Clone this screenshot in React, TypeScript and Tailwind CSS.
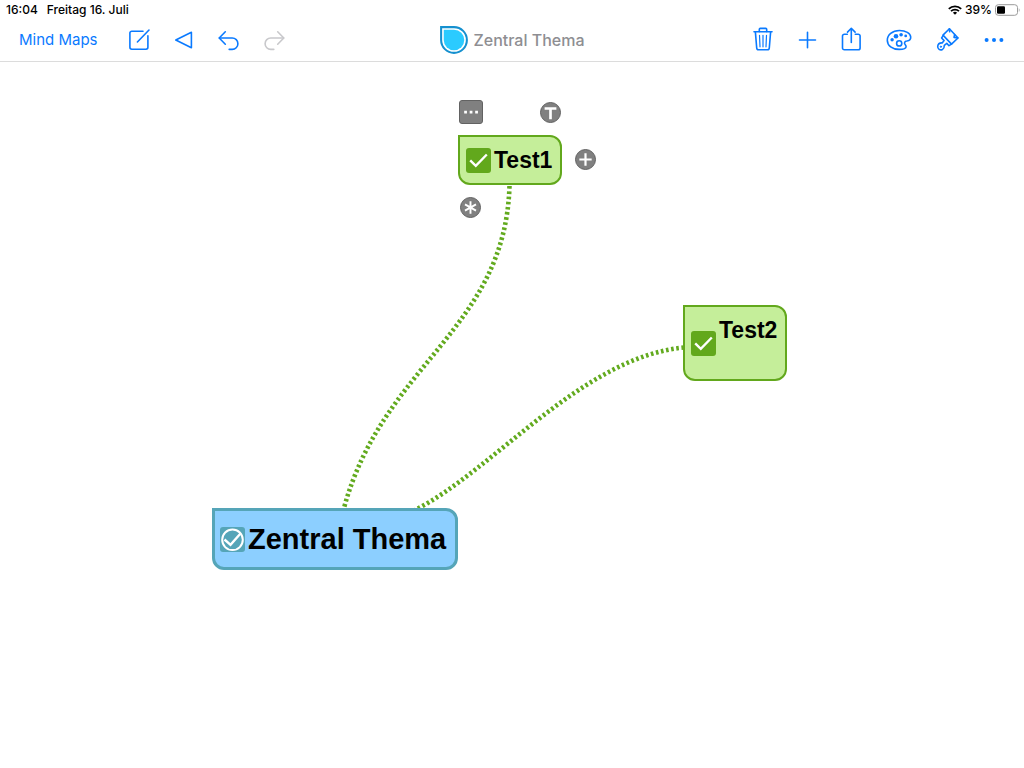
import { useState } from 'react';
import type { ReactNode } from 'react';
import { clsx } from 'clsx';

type ToolButtonProps = {
  label: string;
  className: string;
  disabled?: boolean;
  children: ReactNode;
};

function ToolButton({ label, className, disabled, children }: ToolButtonProps) {
  return (
    <button
      type="button"
      aria-label={label}
      disabled={disabled}
      className={clsx(
        'flex h-full shrink-0 items-center justify-center',
        disabled ? 'text-[#c8c8cb]' : 'text-[#0a7aff]',
        className,
      )}
    >
      <svg
        viewBox="0 0 28 28"
        className="size-7"
        fill="none"
        stroke="currentColor"
        strokeWidth="1.6"
        strokeLinecap="round"
        strokeLinejoin="round"
        aria-hidden="true"
      >
        {children}
      </svg>
    </button>
  );
}

function StatusBar() {
  return (
    <div className="flex h-[19px] items-center justify-between pr-1 pl-1.5 text-xs font-medium text-black">
      <div className="flex gap-[9px]">
        <span>16:04</span>
        <span>Freitag 16. Juli</span>
      </div>
      <div className="flex items-center gap-[3px]">
        <svg viewBox="0 0 14 10" className="h-2.5 w-3.5" fill="none" stroke="black" strokeWidth="1.8" aria-hidden="true">
          <path d="M0.8 3.8a8.9 8.9 0 0 1 12.4 0" />
          <path d="M3 6.2a5.8 5.8 0 0 1 8 0" />
          <path d="M7 9.8 4.9 7.7a3 3 0 0 1 4.2 0z" fill="black" stroke="none" />
        </svg>
        <span>39%</span>
        <svg viewBox="0 0 25 12" className="h-3 w-[25px]" aria-hidden="true">
          <rect x="0.5" y="0.7" width="22" height="10.6" rx="2.8" fill="none" stroke="#9b9b9b" />
          <rect x="2" y="2.2" width="8" height="7.6" rx="1.2" fill="black" />
          <path d="M23.8 4.2v3.6c1-.4 1-3.2 0-3.600z" fill="#9b9b9b" />
        </svg>
      </div>
    </div>
  );
}

function Toolbar() {
  return (
    <div className="grid h-[42px] grid-cols-[1fr_auto_1fr] items-center">
      <div className="flex h-full items-center pl-[19px]">
        <a href="#mind-maps" className="w-[97px] text-[15px] whitespace-nowrap text-[#0a7aff]">
          Mind Maps
        </a>
        <ToolButton label="Bearbeiten" className="w-[45px]">
          <path d="M18 5.2H6.800a1.900 1.900 0 0 0-1.900 1.900v14.200a1.900 1.900 0 0 0 1.900 1.900H21a1.900 1.900 0 0 0 1.900-1.900V9.700" />
          <path d="M12.400 16 24 4" />
        </ToolButton>
        <ToolButton label="Zurück" className="w-[45px]">
          <path d="M21.400 6.300v15.400L5.800 14z" />
        </ToolButton>
        <ToolButton label="Widerrufen" className="w-[45px]">
          <path d="M10.300 5.800 4.200 12l6.100 6.200" />
          <path d="M4.400 12h12.800a5.700 5.700 0 0 1 0 11.400h-3" />
        </ToolButton>
        <ToolButton label="Wiederholen" className="w-[45px]" disabled>
          <path d="M17.700 5.800 23.800 12l-6.100 6.200" />
          <path d="M23.600 12H10.800a5.700 5.700 0 0 0 0 11.400h3" />
        </ToolButton>
      </div>

      <div className="flex items-center gap-1.5">
        <svg viewBox="0 0 30 30" className="size-7" aria-hidden="true">
          <path d="M1.200 1.200H15A13.800 13.800 0 1 1 1.200 15z" fill="white" stroke="#1590cf" strokeWidth="2.200" />
          <path d="M4 4h11A11 11 0 1 1 4 15z" fill="#2bcbff" />
        </svg>
        <h1 className="text-base font-medium whitespace-nowrap text-[#8e8e92]">Zentral Thema</h1>
      </div>

      <div className="flex h-full items-center justify-end pr-[7px]">
        <ToolButton label="Löschen" className="w-11">
          <path d="M5 5.800h18" />
          <path d="M10.300 5.600V3.400a1 1 0 0 1 1-1h5.400a1 1 0 0 1 1 1v2.200" />
          <path d="m6.400 6.100 1.300 15.900a1.900 1.900 0 0 0 1.900 1.800h8.800a1.900 1.900 0 0 0 1.900-1.800l1.300-15.900" />
          <path d="m10.500 9.300.5 11.500M14 9.300v11.500M17.500 9.300l-.5 11.500" strokeWidth="1.200" />
        </ToolButton>
        <ToolButton label="Hinzufügen" className="w-11">
          <path d="M14.500 6.200v15.600M6.500 14h16" />
        </ToolButton>
        <ToolButton label="Teilen" className="w-11">
          <path d="M10.300 8.200H7.400a1.900 1.900 0 0 0-1.900 1.900v11.800a1.900 1.900 0 0 0 1.900 1.900h13.800a1.900 1.900 0 0 0 1.900-1.900V10.100a1.900 1.900 0 0 0-1.900-1.900h-2.900" />
          <path d="M14.300 16.500V2.500M10.500 6.100l3.800-3.800 3.800 3.800" />
        </ToolButton>
        <ToolButton label="Farben" className="w-[52px]">
          <path d="M20.100 18.500c-1.200-1.300-.5-3.300 1.700-3.500 2.600-.3 4.100-1.800 3.900-4.100C25.400 7.300 20.800 4.500 14.500 4.500 7.300 4.500 2.300 8.700 2.300 14.200c0 5.400 4.900 9.200 11.900 9.200 3.700 0 6.800-.9 6.900-2.600.1-.9-.4-1.600-1-2.300z" />
          <circle cx="14.200" cy="17.400" r="2.600" />
          <g fill="currentColor" stroke="none">
            <circle cx="7.100" cy="13.800" r="1.700" />
            <circle cx="11" cy="10.200" r="2.300" />
            <circle cx="16.100" cy="8.700" r="1.800" />
            <circle cx="20.700" cy="9.900" r="1.400" />
          </g>
        </ToolButton>
        <ToolButton label="Stil" className="w-[46px]">
          <path d="M15.400 2.800 24 12l-6.500 6.100L9 9.100z" />
          <path d="m15.400 2.800.3 3M23.700 11.900l-3.700-.5.600-2.800" />
          <path d="M9.300 9.400 7.600 12l2.500 2.600-1.900 2.300c-2.500-.1-4.300 1.400-4.500 3.500-.2 2.600 2.400 4.300 4.700 3.100 1.400-.8 2-2.200 1.900-4.100l2.500-2 2.200 2.300 2.500-1.600" />
          <circle cx="6.900" cy="20.700" r=".7" fill="currentColor" strokeWidth=".8" />
        </ToolButton>
        <ToolButton label="Mehr" className="w-[46px]">
          <g fill="currentColor" stroke="none">
            <circle cx="6.600" cy="14" r="2" />
            <circle cx="14" cy="14" r="2" />
            <circle cx="21.400" cy="14" r="2" />
          </g>
        </ToolButton>
      </div>
    </div>
  );
}

type TaskCheckProps = {
  id: string;
  className: string;
  ringed?: boolean;
};

function TaskCheck({ id, className, ringed }: TaskCheckProps) {
  const [checked, setChecked] = useState(true);

  return (
    <span className="relative size-[25px] shrink-0">
      <input
        id={id}
        type="checkbox"
        checked={checked}
        onChange={(event) => setChecked(event.target.checked)}
        className={clsx('block size-full appearance-none rounded-[3px]', className)}
      />
      <svg
        viewBox="0 0 25 25"
        className="pointer-events-none absolute inset-0 size-full"
        fill="none"
        stroke="white"
        strokeWidth="2.4"
        aria-hidden="true"
      >
        {ringed ? <circle cx="12.500" cy="12.800" r="10.300" strokeWidth="2" /> : null}
        {checked ? <path d={ringed ? 'M4.500 12.500 10.500 17.800 20.500 6.500' : 'M4.200 12.300 9.800 17.800 20.800 6.500'} /> : null}
      </svg>
    </span>
  );
}

type HandleProps = {
  label: string;
  className: string;
  children: ReactNode;
};

function Handle({ label, className, children }: HandleProps) {
  return (
    <button
      type="button"
      aria-label={label}
      className={clsx('absolute border border-[#626262] bg-[#808080]', className)}
    >
      <svg viewBox="0 0 20 20" className="size-full" fill="none" stroke="white" strokeWidth="2.3" aria-hidden="true">
        {children}
      </svg>
    </button>
  );
}

function MapCanvas() {
  return (
    <main className="relative flex-1 overflow-hidden font-['Liberation_Sans',Arial,sans-serif] font-bold text-black">
      <svg
        width="800"
        height="520"
        className="absolute top-0 left-0"
        fill="none"
        stroke="#62aa1e"
        strokeWidth="4.6"
        strokeDasharray="2.6 2.6"
        aria-hidden="true"
      >
        <path d="M509.500 124C505 268 383 302 344 446" />
        <path d="M684 285.500C582 295 494 408 415 448" />
      </svg>

      {/* selected node */}
      <div className="absolute top-[73px] left-[458px] flex h-[50px] w-[104px] items-center gap-[3px] rounded-xl rounded-tl-none border-2 border-[#62a81c] bg-[#c5ee9a] pl-1.5">
        <TaskCheck id="task-test1" className="bg-[#62a81c]" />
        <label htmlFor="task-test1" className="text-[23px] leading-7">
          Test1
        </label>
      </div>
      <Handle label="Optionen" className="top-[38px] left-[459px] size-6 rounded-[3px]">
        <path d="M3.800 10h2.500M8.800 10h2.500M13.800 10h2.500" strokeWidth="2.500" />
      </Handle>
      <Handle label="Text" className="top-10 left-[540px] size-[21px] rounded-full">
        <path d="M3.800 5.800h12.400M10 6v11" strokeWidth="2.800" />
      </Handle>
      <Handle label="Ast hinzufügen" className="top-[87px] left-[575px] size-[21px] rounded-full">
        <path d="M10 3.500v13M3.500 10h13" />
      </Handle>
      <Handle label="Verbinden" className="top-[135px] left-[460px] size-[21px] rounded-full">
        <path d="M10 3.500v13M4.200 6.700l11.600 6.600M15.800 6.700 4.200 13.300" strokeWidth="2" />
      </Handle>

      <div className="absolute top-[243px] left-[683px] flex h-[76px] w-[104px] items-center gap-[3px] rounded-xl rounded-tl-none border-2 border-[#62a81c] bg-[#c5ee9a] pl-1.5">
        <TaskCheck id="task-test2" className="bg-[#62a81c]" />
        <label htmlFor="task-test2" className="self-start pt-[9px] text-[23px] leading-7">
          Test2
        </label>
      </div>

      <div className="absolute top-[446px] left-[212px] flex h-[62px] w-[246px] items-center gap-[3px] rounded-xl rounded-tl-none border-3 border-[#55a5b8] bg-[#8ccfff] pl-[5px]">
        <TaskCheck id="task-zentral" className="bg-[#55a5b8]" ringed />
        <label htmlFor="task-zentral" className="text-[29px] leading-8 whitespace-nowrap">
          Zentral Thema
        </label>
      </div>
    </main>
  );
}

export default function App() {
  return (
    <div className="flex min-h-screen flex-col bg-white font-['Inter','Liberation_Sans',sans-serif]">
      <header className="border-b border-[#dcdcdc]">
        <StatusBar />
        <Toolbar />
      </header>
      <MapCanvas />
    </div>
  );
}
